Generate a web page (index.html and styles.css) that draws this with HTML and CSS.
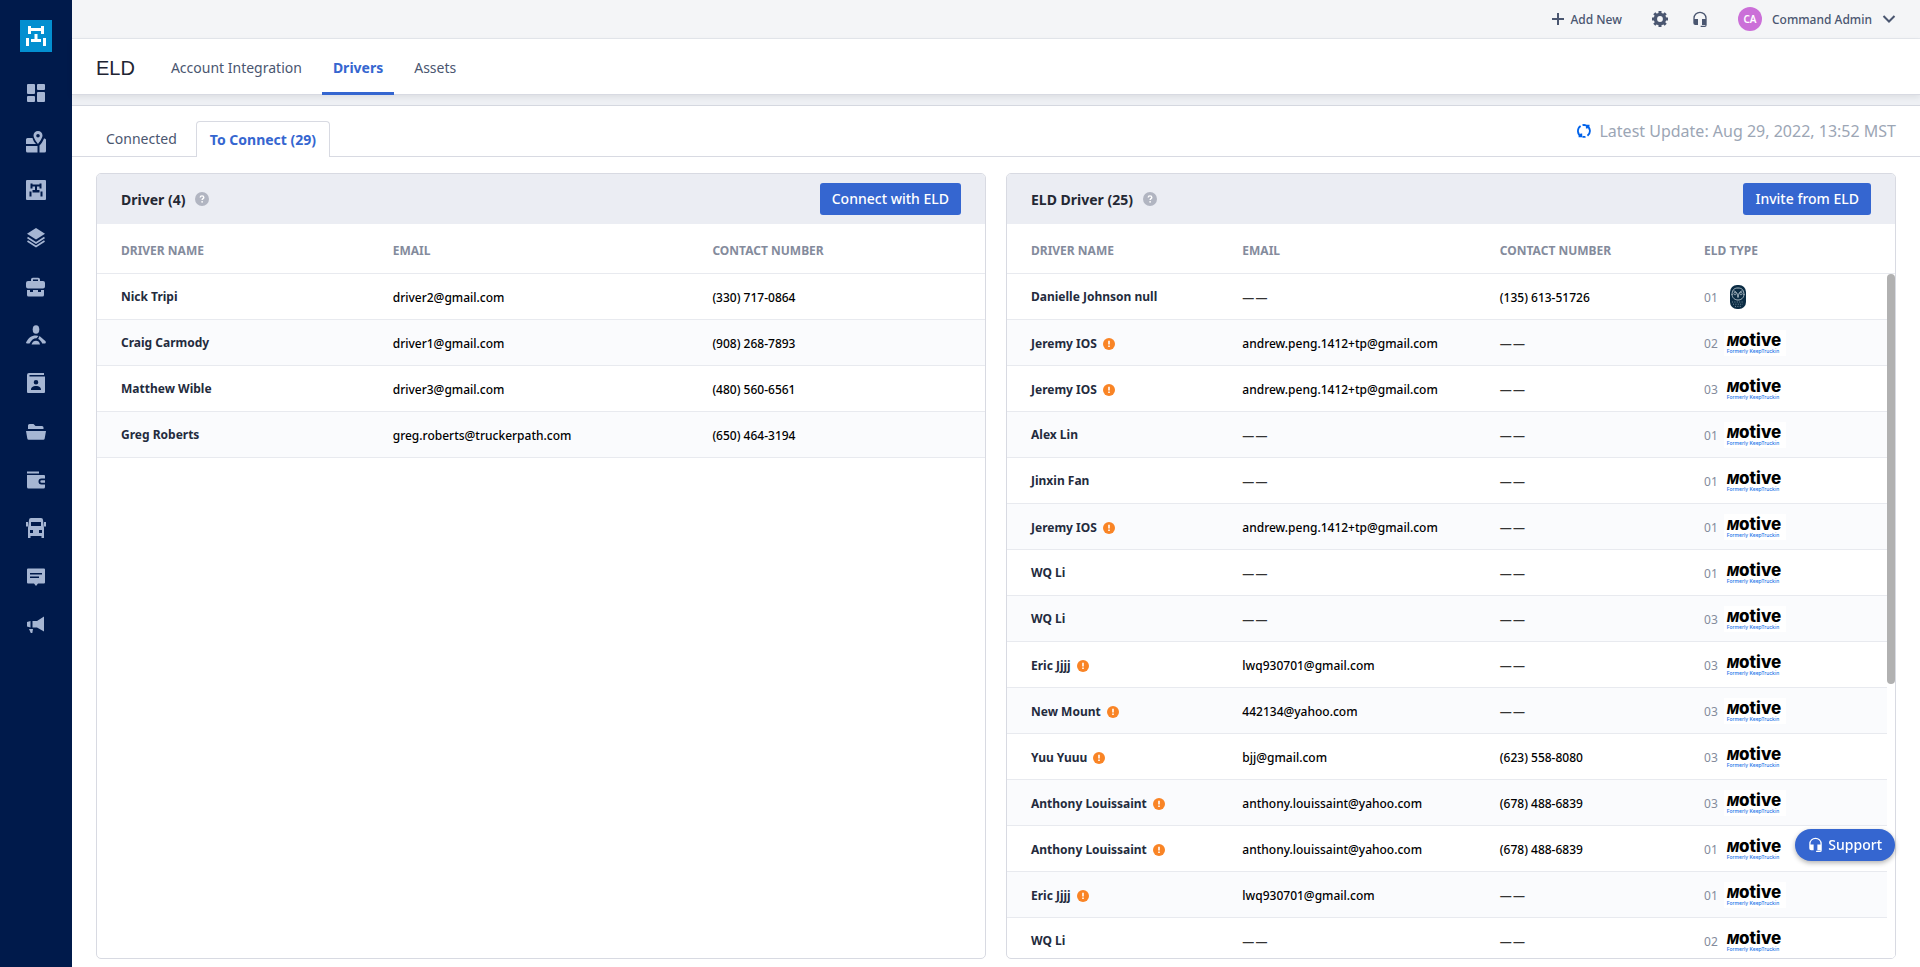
FILE: index.html
```
<!DOCTYPE html>
<html lang="en">

<head>
    <meta charset="UTF-8">
    <title>ELD - Drivers</title>
    <link rel="stylesheet" href="styles.css">
</head>
<body>
    <!-- icons used more than once -->
    <svg class="sprite" aria-hidden="true">
        <symbol id="i-chassis" viewBox="0 0 20 20">
            <path d="M2 0h3v2h10V0h3v8h-3V5H5v3H2zM0 12h3v8H0zM17 12h3v8h-3zM8.500 8h3v5H15v3H5v-3h3.500z"/>
        </symbol>
        <symbol id="i-headset" viewBox="0 0 24 24">
            <path d="M12 1a10 10 0 0 0-10 10v7a3 3 0 0 0 3 3h4v-9H4v-1a8 8 0 0 1 16 0v1h-5v9h5v1h-7v2h6a3 3 0 0 0 3-3V11A10 10 0 0 0 12 1z"/>
        </symbol>
        <symbol id="i-help" viewBox="0 0 14 14">
            <circle cx="7" cy="7" r="7" fill="#b1b5c1"/>
            <path d="M5.2 5.6c0-1.1.8-1.7 1.8-1.7s1.8.6 1.8 1.5c0 1.2-1.7 1.3-1.7 2.5" fill="none" stroke="#fff" stroke-width="1.4"/>
            <circle cx="7.1" cy="9.8" r=".9" fill="#fff"/>
        </symbol>
        <symbol id="i-warn" viewBox="0 0 12 12">
            <circle cx="6" cy="6" r="6" fill="#f98425"/>
            <path d="M5.2 2.8h1.6v3.8H5.2zM5.2 7.6h1.6v1.5H5.2z" fill="#fff"/>
        </symbol>
        <symbol id="i-owl" viewBox="0 0 16 24">
            <rect width="16" height="24" rx="7" fill="#0b2c44"/>
            <path d="M2 10C2 5 4 3 8 3s6 2 6 7M2 9c0 4 3 6 6 6s6-2 6-6M3.500 6C6 6 7.500 8 8 12.500 8.500 8 10 6 12.500 6" fill="none" stroke="#b9c6cf" stroke-width=".9"/>
            <circle cx="5" cy="8.600" r="1.200" fill="none" stroke="#b9c6cf" stroke-width=".7"/>
            <circle cx="11" cy="8.600" r="1.200" fill="none" stroke="#b9c6cf" stroke-width=".7"/>
            <path d="M2 17h12M3 19.200h10M5 21.400h6" stroke="#7f95a3" stroke-width=".9" stroke-dasharray="1 1.400"/>
        </symbol>
    </svg>

    <nav class="sidebar" aria-label="Main">
        <a class="logo" href="#" aria-label="Home"><svg width="20" height="20"><use href="#i-chassis"/></svg></a>
        <a href="#" aria-label="Dashboard"><svg viewBox="0 0 20 20"><rect x="1" y="1" width="8" height="10" rx="1"/><rect x="11" y="1" width="8" height="6" rx="1"/><rect x="1" y="13" width="8" height="6" rx="1"/><rect x="11" y="9" width="8" height="10" rx="1"/></svg></a>
        <a href="#" aria-label="Map"><svg viewBox="0 0 20 22"><path fill-rule="evenodd" d="M12 0a4.500 4.500 0 0 1 4.500 4.500C16.500 7.500 12 13 12 13S7.500 7.500 7.500 4.500A4.500 4.500 0 0 1 12 0zm0 3a1.800 1.800 0 1 0 0 3.600A1.800 1.800 0 0 0 12 3z"/><path d="M1.500 7H6.500c.6 2.500 2 4.500 3.500 6H0V8.500A1.500 1.500 0 0 1 1.500 7zM0 15h11.500v6.500h-10A1.500 1.500 0 0 1 0 20zM13.500 21.500V14.500C15.500 12.500 17 10 18 7.500c1 0 2 .5 2 1.500v11a1.500 1.500 0 0 1-1.500 1.500z"/></svg></a>
        <a href="#" aria-label="Loads"><svg viewBox="0 0 20 20"><rect width="20" height="20" rx="1"/><path fill="#001a4b" d="M4.500 3.500h2v1h7v-1h2v5h-2v-2h-2.500v3.500h2.500v2.500h-7V10H9V6.500H6.500v2h-2zM3.500 11.500h2v5h-2zM14.500 11.500h2v5h-2z"/></svg></a>
        <a href="#" aria-label="Layers"><svg viewBox="0 0 20 20"><path d="M10 0l9 5.800-9 5.800-9-5.800z"/><path d="M1.500 9.500l8.500 5.400 8.500-5.400M1.500 13l8.500 5.400 8.500-5.400" fill="none" stroke="#a6b6d3" stroke-width="1.700"/></svg></a>
        <a href="#" aria-label="Jobs"><svg viewBox="0 0 20 20"><path fill-rule="evenodd" d="M5 4V2.500A1.800 1.800 0 0 1 6.800.7h5.400A1.800 1.800 0 0 1 14 2.500V4h3a2 2 0 0 1 2 2v3.500a2 2 0 0 1-2 2H2a2 2 0 0 1-2-2V6a2 2 0 0 1 2-2zm2 0h5V2.500H7z"/><path d="M1 13h3v2h3v-2h5v2h3v-2h3v5a1.500 1.500 0 0 1-1.500 1.500h-14A1.500 1.500 0 0 1 1 18z"/></svg></a>
        <a href="#" aria-label="Drivers"><svg viewBox="0 0 20 20"><ellipse cx="10" cy="4.500" rx="3.300" ry="4.300"/><path d="M0 17.500C2.500 13 5 10.500 10 10.500c1 0 2 .2 2.500.5l-2 2.300C7.500 13.300 5.500 15 3.500 18.500h-2A1.200 1.200 0 0 1 0 17.500zM13.500 11l5.800 5c1 1 .5 2.500-.8 2.500h-2.300c-.8-2-2-3.500-4-4.500zM5.500 19.500c1-2.700 2.500-3.700 4.500-3.700s3.500 1 4 3.700z"/></svg></a>
        <a href="#" aria-label="Contacts"><svg viewBox="0 0 20 20"><path fill-rule="evenodd" d="M3 0h15v2H3.500v1.500H19V19a1 1 0 0 1-1 1H2a1 1 0 0 1-1-1V2a2 2 0 0 1 2-2zm7 7a2.300 2.300 0 1 0 0 4.600A2.300 2.300 0 0 0 10 7zm-5 10h10c0-3-2-4-5-4s-5 1-5 4z"/></svg></a>
        <a href="#" aria-label="Documents"><svg viewBox="0 0 20 20"><path d="M2 7V3.500A1.500 1.500 0 0 1 3.500 2h4l2 2H16a1.500 1.500 0 0 1 1.500 1.500V7zM0 9h20l-1.300 7.500a1.500 1.500 0 0 1-1.500 1.300H2.800a1.500 1.500 0 0 1-1.500-1.300z"/></svg></a>
        <a href="#" aria-label="Wallet"><svg viewBox="0 0 20 20"><path fill-rule="evenodd" d="M1 1.500h12V3.500H1zM1 5h17a1 1 0 0 1 1 1v2.500h-3.500a3 3 0 0 0 0 6H19V17a1.500 1.500 0 0 1-1.500 1.500h-15A1.500 1.500 0 0 1 1 17z"/><path d="M15.500 10.300H19v2.400h-3.500a1.200 1.200 0 0 1 0-2.400z"/></svg></a>
        <a href="#" aria-label="Trucks"><svg viewBox="0 0 20 20"><path fill-rule="evenodd" d="M5 0h10a2 2 0 0 1 2 2l1 8v10h-2.500v-2h-11v2H2V10l1-8a2 2 0 0 1 2-2zm0 4v4h10V4zM4 12v3h3v-3zm9 0v3h3v-3z"/><path d="M0 4h2v4.500H0zM18 4h2v4.500h-2z"/></svg></a>
        <a href="#" aria-label="Messages"><svg viewBox="0 0 20 20"><path fill-rule="evenodd" d="M2 1.500h16a1 1 0 0 1 1 1V15.500a1 1 0 0 1-1 1h-6l-2 2.500-2-2.500H2a1 1 0 0 1-1-1v-13a1 1 0 0 1 1-1zM4 6v1.500h12V6zm0 3.500V11h9V9.500z"/></svg></a>
        <a href="#" aria-label="Announcements"><svg viewBox="0 0 20 20"><path d="M6.500 6H11l7-4.500V16.500L11 12.500H6.500zM1 7l3.500-1v6.500L1 11.500zM3 14h4l-.7 4H4.800z"/></svg></a>
    </nav>

    <div class="page">
        <header class="topbar">
            <button class="top-btn" type="button"><svg width="12" height="12" viewBox="0 0 12 12"><path d="M6 0v12M0 6h12" stroke="currentColor" stroke-width="2"/></svg>Add New</button>
            <button class="top-btn" type="button" aria-label="Settings"><svg width="16" height="16" viewBox="0 0 16 16"><circle cx="8" cy="8" r="4.600" fill="none" stroke="currentColor" stroke-width="3.400"/><path d="M8 0v3M8 13v3M0 8h3M13 8h3M2.300 2.300l2.200 2.200M11.500 11.500l2.200 2.200M2.300 13.700l2.200-2.200M11.500 4.500l2.200-2.200" stroke="currentColor" stroke-width="3"/></svg></button>
            <button class="top-btn" type="button" aria-label="Help"><svg width="16" height="16" fill="currentColor"><use href="#i-headset"/></svg></button>
            <button class="top-btn user" type="button"><span class="avatar">CA</span>Command Admin<svg width="14" height="8" viewBox="0 0 14 8"><path d="M1.500 1L7 6.500 12.500 1" fill="none" stroke="currentColor" stroke-width="2"/></svg></button>
        </header>

        <div class="subnav">
            <h1>ELD</h1>
            <nav aria-label="ELD">
                <a href="#">Account Integration</a>
                <a class="active" href="#">Drivers</a>
                <a href="#">Assets</a>
            </nav>
        </div>

        <main>
            <div class="tabs">
                <a href="#">Connected</a>
                <a class="active" href="#">To Connect (29)</a>
                <p class="updated"><svg width="14" height="14" viewBox="0 0 14 14"><path d="M4.600 12.500A6 6 0 0 1 3.600 2M5.500 1.200a6 6 0 0 1 3.500.1M9.500 1.600a6 6 0 0 1 1 10.200M8.500 12.800a6 6 0 0 1-3-.1M9.800 4.500V1.600h2.700M4.300 9.500v2.900H1.600" fill="none" stroke="#0062ea" stroke-width="1.800"/></svg>Latest Update: Aug 29, 2022, 13:52 MST</p>
            </div>

            <div class="panels">
                <section class="panel">
                    <div class="panel-head">
                        <h2>Driver (4)</h2>
                        <svg width="14" height="14"><use href="#i-help"/></svg>
                        <button type="button">Connect with ELD</button>
                    </div>
                    <div class="panel-body">
                        <table class="drivers">
                            <thead>
                                <tr><th>DRIVER NAME</th><th>EMAIL</th><th>CONTACT NUMBER</th></tr>
                            </thead>
                            <tbody>
                                <tr><td class="name">Nick Tripi</td><td>driver2@gmail.com</td><td>(330) 717-0864</td></tr>
                                <tr><td class="name">Craig Carmody</td><td>driver1@gmail.com</td><td>(908) 268-7893</td></tr>
                                <tr><td class="name">Matthew Wible</td><td>driver3@gmail.com</td><td>(480) 560-6561</td></tr>
                                <tr><td class="name">Greg Roberts</td><td>greg.roberts@truckerpath.com</td><td>(650) 464-3194</td></tr>
                            </tbody>
                        </table>
                    </div>
                </section>

                <section class="panel">
                    <div class="panel-head">
                        <h2>ELD Driver (25)</h2>
                        <svg width="14" height="14"><use href="#i-help"/></svg>
                        <button type="button">Invite from ELD</button>
                    </div>
                    <div class="panel-body">
                        <table class="eld-drivers">
                            <thead>
                                <tr><th>DRIVER NAME</th><th>EMAIL</th><th>CONTACT NUMBER</th><th>ELD TYPE</th></tr>
                            </thead>
                            <tbody id="eld-rows"></tbody>
                        </table>
                        <div class="scrollbar"><div class="thumb"></div></div>
                    </div>
                </section>
            </div>
        </main>
    </div>

    <button class="support" type="button"><svg width="15" height="15" fill="currentColor"><use href="#i-headset"/></svg>Support</button>

    <script>
        // name, flagged, email, phone, type, logo
        const drivers = [
            ['Danielle Johnson null', false, '', '(135) 613-51726', '01', 'owl'],
            ['Jeremy IOS', true, 'andrew.peng.1412+tp@gmail.com', '', '02', 'motive'],
            ['Jeremy IOS', true, 'andrew.peng.1412+tp@gmail.com', '', '03', 'motive'],
            ['Alex Lin', false, '', '', '01', 'motive'],
            ['Jinxin Fan', false, '', '', '01', 'motive'],
            ['Jeremy IOS', true, 'andrew.peng.1412+tp@gmail.com', '', '01', 'motive'],
            ['WQ Li', false, '', '', '01', 'motive'],
            ['WQ Li', false, '', '', '03', 'motive'],
            ['Eric Jjjj', true, 'lwq930701@gmail.com', '', '03', 'motive'],
            ['New Mount', true, '442134@yahoo.com', '', '03', 'motive'],
            ['Yuu Yuuu', true, 'bjj@gmail.com', '(623) 558-8080', '03', 'motive'],
            ['Anthony Louissaint', true, 'anthony.louissaint@yahoo.com', '(678) 488-6839', '03', 'motive'],
            ['Anthony Louissaint', true, 'anthony.louissaint@yahoo.com', '(678) 488-6839', '01', 'motive'],
            ['Eric Jjjj', true, 'lwq930701@gmail.com', '', '01', 'motive'],
            ['WQ Li', false, '', '', '02', 'motive'],
        ];

        const empty = '<span class="empty">—&hairsp;—</span>';
        const warn = '<svg width="12" height="12"><use href="#i-warn"/></svg>';
        const logos = {
            owl: '<svg class="owl" width="16" height="24"><use href="#i-owl"/></svg>',
            motive: '<span class="motive"><b><i>M</i>otive</b><small>Formerly KeepTruckin</small></span>',
        };

        document.getElementById('eld-rows').innerHTML = drivers.map(([name, flagged, email, phone, type, logo]) => `
            <tr>
                <td class="name${flagged ? ' flagged' : ''}">${name}${flagged ? warn : ''}</td>
                <td>${email || empty}</td>
                <td>${phone || empty}</td>
                <td><div class="type">${type}${logos[logo]}</div></td>
            </tr>`).join('');
    </script>
</body>

</html>
```
FILE: styles.css
```
* {
    box-sizing: border-box;
}

body {
    display: flex;
    height: 100vh;
    margin: 0;
    font-family: "Noto Sans", sans-serif;
    font-size: 12px;
    color: #4a5670;
    background: #fff;
    overflow: hidden;
}

a {
    color: inherit;
    text-decoration: none;
}

button {
    font: inherit;
    border: none;
    cursor: pointer;
}

h1, h2, p {
    margin: 0;
}

.sprite {
    display: none;
}

/* Left icon menu */
.sidebar {
    display: flex;
    flex-direction: column;
    align-items: center;
    flex: none;
    width: 72px;
    padding-top: 20px;
    background: #001a4b;
    fill: #a6b6d3;
}

.sidebar a {
    display: flex;
    align-items: center;
    justify-content: center;
    width: 48px;
    height: 5vh;
}

.sidebar a svg {
    width: 20px;
    height: 22px;
}

.sidebar .logo {
    width: 32px;
    height: 32px;
    margin-bottom: 17px;
    background: #038fd0;
    fill: #fff;
}

.sidebar .logo svg {
    height: 20px;
}

.page {
    display: flex;
    flex-direction: column;
    flex: 1;
    min-width: 0;
}

/* Top bar */
.topbar {
    display: flex;
    align-items: center;
    justify-content: flex-end;
    gap: 24px;
    height: 39px;
    padding-right: 24px;
    background: #f4f5f7;
    border-bottom: 1px solid #e5e8ed;
}

.top-btn {
    display: flex;
    align-items: center;
    gap: 6px;
    padding: 0;
    font-weight: 500;
    color: #4a5670;
    background: none;
}

.top-btn:first-child {
    margin-right: 6px;
}

.user {
    gap: 10px;
    margin-left: 6px;
}

.avatar {
    width: 24px;
    height: 24px;
    border-radius: 50%;
    font-size: 10px;
    font-weight: 600;
    line-height: 24px;
    text-align: center;
    color: #fff;
    background: #cb6fd8;
}

/* Section nav */
.subnav {
    position: relative;
    display: flex;
    gap: 26px;
    height: 56px;
    padding-left: 24px;
    background: #fff;
    border-bottom: 1px solid #d8dae2;
    box-shadow: 0 2px 6px rgba(0, 0, 0, 0.08);
}

.subnav h1 {
    font-family: "Liberation Sans", sans-serif;
    font-size: 20px;
    font-weight: 400;
    line-height: 58px;
    color: #1e2433;
}

.subnav nav {
    display: flex;
    gap: 10px;
}

.subnav a {
    height: 56px;
    padding: 0 10px;
    font-size: 14px;
    line-height: 58px;
}

.subnav .active {
    padding: 0 11px;
    font-weight: 700;
    color: #3566d0;
    border-bottom: 3px solid #3566d0;
    border-radius: 2px 2px 0 0;
}

main {
    display: flex;
    flex-direction: column;
    flex: 1;
    min-height: 0;
    border-top: 10px solid #eef0f4;
}

/* Tabs */
.tabs {
    position: relative;
    display: flex;
    align-items: flex-end;
    flex: none;
    height: 52px;
    padding: 0 24px;
    font-size: 14px;
    background: #fff;
    border-top: 1px solid #d5d8e0;
    border-bottom: 1px solid #d8dae2;
}

.tabs a {
    height: 36px;
    margin-bottom: -1px;
    padding: 0 10px;
    line-height: 36px;
}

.tabs .active {
    margin-left: 9px;
    padding: 0 13px;
    font-weight: 700;
    color: #3566d0;
    background: #fff;
    border: 1px solid #d8dae2;
    border-bottom: none;
    border-radius: 4px 4px 0 0;
}

.updated {
    display: flex;
    align-items: center;
    align-self: center;
    gap: 8px;
    margin-left: auto;
    font-size: 16px;
    color: #9ca6b5;
}

/* Panels */
.panels {
    display: grid;
    grid-template-columns: 1fr 1fr;
    gap: 20px;
    flex: 1;
    min-height: 0;
    padding: 16px 24px 8px;
}

.panel {
    display: flex;
    flex-direction: column;
    min-height: 0;
    border: 1px solid #d8dae2;
    border-radius: 5px;
    overflow: hidden;
}

.panel-head {
    display: flex;
    align-items: center;
    gap: 10px;
    flex: none;
    height: 50px;
    padding: 0 24px;
    background: #ebedf3;
}

.panel-head h2 {
    font-size: 14px;
    font-weight: 700;
    color: #242833;
}

.panel-head button {
    height: 32px;
    margin-left: auto;
    padding: 0 12px 2px;
    font-size: 14px;
    font-weight: 500;
    color: #fff;
    background: #3566d0;
    border-radius: 3px;
}

.panel-body {
    position: relative;
    flex: 1;
    min-height: 0;
    overflow: hidden;
}

table {
    width: 100%;
    table-layout: fixed;
    border-collapse: separate;
    border-spacing: 0;
}

th, td {
    height: 46px;
    padding: 1px 0 0;
    text-align: left;
    white-space: nowrap;
    border-bottom: 1px solid #e8eaef;
}

th {
    height: 50px;
    padding: 4px 0 0;
    font-weight: 700;
    color: #848b9c;
}

th:first-child, td:first-child {
    padding-left: 24px;
}

.drivers th:nth-child(1) { width: 33.3%; }
.drivers th:nth-child(2) { width: 36%; }

.eld-drivers th:nth-child(1) { width: 26.5%; }
.eld-drivers th:nth-child(2) { width: 29%; }
.eld-drivers th:nth-child(3) { width: 23%; }

td {
    font-weight: 500;
    color: #000;
}

tbody tr:nth-child(even) {
    background: #fafbfd;
}

td.name {
    padding-top: 0;
    padding-bottom: 1px;
    font-weight: 700;
    color: #242b3d;
}

td.flagged {
    padding-top: 1px;
    padding-bottom: 0;
}

.flagged svg {
    margin-left: 6px;
    vertical-align: -2px;
}

.empty {
    color: #333;
}

.type {
    display: flex;
    align-items: center;
    gap: 6px;
    font-weight: 400;
    color: #848b9c;
}

.owl {
    margin-left: 6px;
}

/* Motive wordmark */
.motive {
    display: flex;
    flex-direction: column;
    width: 62px;
    height: 26px;
    padding: 4px 3px 0;
    font-family: Inter, sans-serif;
    background: #fff;
}

.motive b {
    font-size: 17px;
    font-weight: 800;
    line-height: 13px;
    color: #000;
}

.motive i {
    font-size: 13px;
    font-weight: 800;
}

.motive small {
    font-size: 5px;
    font-weight: 500;
    line-height: 6px;
    color: #1a73e8;
}

.scrollbar {
    position: absolute;
    top: 50px;
    right: 0;
    bottom: 0;
    width: 8px;
    background: #fff;
}

.thumb {
    height: 60%;
    border-radius: 4px;
    background: #b1b1b1;
}

/* Floating help button */
.support {
    position: fixed;
    right: 25px;
    bottom: 106px;
    display: flex;
    align-items: center;
    gap: 5px;
    height: 32px;
    padding: 0 13px 2px;
    font-size: 14px;
    font-weight: 500;
    color: #fff;
    background: #3566d0;
    border-radius: 16px;
    box-shadow: 0 2px 5px rgba(0, 0, 0, 0.3);
}
```
